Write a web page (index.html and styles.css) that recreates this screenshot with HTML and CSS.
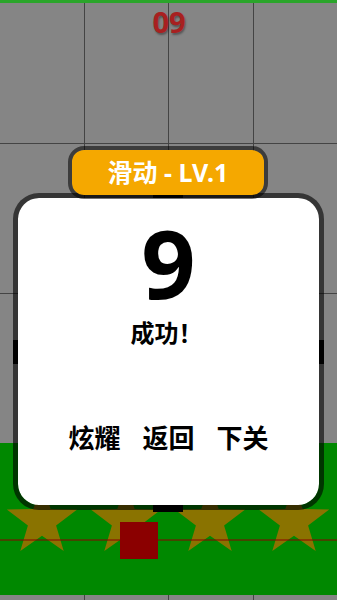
FILE: index.html
```html
<!DOCTYPE html>
<html>
<head>
<meta charset="utf-8">
<link rel="stylesheet" href="styles.css">
</head>
<body>
<div class="screen">
  <div class="board">
    <div class="top-strip"></div>
    <div class="row row-a"><div class="cell"></div><div class="cell"></div><div class="cell"></div><div class="cell"></div></div>
    <div class="row row-b"><div class="cell"></div><div class="cell"></div><div class="cell"></div><div class="cell"></div></div>
    <div class="row row-c"><div class="cell"></div><div class="cell"></div><div class="cell"></div><div class="cell"></div></div>
    <div class="ground"></div>
    <div class="row row-d"><div class="cell"></div><div class="cell"></div><div class="cell"></div><div class="cell"></div></div>
  </div>

  <div class="score">09</div>

  <svg class="stars" width="337" height="80" viewBox="0 480 337 80">
    <g fill="#8a7300">
      <polygon points="42,484 50.7,509 77.2,509.6 56.1,525.6 63.7,550.9 42,535.8 20.3,550.9 27.9,525.6 6.8,509.6 33.3,509"/>
      <polygon points="126,484 134.7,509 161.2,509.6 140.1,525.6 147.7,550.9 126,535.8 104.3,550.9 111.9,525.6 90.8,509.6 117.3,509"/>
      <polygon points="210,484 218.7,509 245.2,509.6 224.1,525.6 231.7,550.9 210,535.8 188.3,550.9 195.9,525.6 174.8,509.6 201.3,509"/>
      <polygon points="294,484 302.7,509 329.2,509.6 308.1,525.6 315.7,550.9 294,535.8 272.3,550.9 279.9,525.6 258.8,509.6 285.3,509"/>
    </g>
    <rect x="120" y="522" width="38" height="37" fill="#8b0000"/>
    <rect x="0" y="539.5" width="337" height="1" fill="#8b0000"/>
  </svg>

  <div class="hidden-bar bar-h"></div>
  <div class="hidden-bar bar-v"></div>

  <div class="overlay">
    <div class="level-pill">滑动 - LV.1</div>
    <div class="dialog">
      <div class="big-score">9</div>
      <div class="result">成功！</div>
      <div class="actions">
        <span class="action">炫耀</span>
        <span class="action">返回</span>
        <span class="action">下关</span>
      </div>
    </div>
  </div>
</div>
</body>
</html>
```

FILE: styles.css
```css
* { box-sizing: border-box; }
html, body { margin: 0; padding: 0; }
body {
  width: 337px;
  height: 600px;
  overflow: hidden;
  background: #858585;
  font-family: "Noto Sans", "Noto Sans CJK SC", sans-serif;
}
.screen {
  position: relative;
  width: 337px;
  height: 600px;
  overflow: hidden;
}
.board {
  display: flex;
  flex-direction: column;
  height: 600px;
}
.top-strip {
  height: 3px;
  background: #2aa52a;
}
.row {
  display: grid;
  grid-template-columns: 84px 84px 85px 84px;
}
.row-a { height: 140px; }
.row-b { height: 150px; border-top: 1px solid #444; }
.row-c { height: 150px; border-top: 1px solid #444; }
.row-d { flex: 1; }
.cell + .cell { border-left: 1px solid #444; }
.ground {
  height: 152px;
  background: #008800;
}
.score {
  position: absolute;
  top: 2px;
  left: 0;
  right: 0;
  text-align: center;
  padding-left: 1px;
  font-size: 29px;
  line-height: 40px;
  font-weight: 700;
  color: #a82020;
  text-shadow: 1px 2px 2px rgba(0,0,0,0.35);
}
.stars {
  position: absolute;
  left: 0;
  top: 480px;
  display: block;
}
.hidden-bar {
  position: absolute;
  background: #000;
}
.bar-h { left: 13px; width: 311px; top: 340px; height: 24px; }
.bar-v { left: 153px; width: 30px; top: 192px; height: 320px; }

.overlay {
  position: absolute;
  inset: 0;
  display: flex;
  flex-direction: column;
  align-items: center;
  padding-top: 146px;
}
.level-pill {
  position: relative;
  z-index: 2;
  width: 200px;
  height: 53px;
  margin-left: -1px;
  border: 4px solid rgba(0,0,0,0.55);
  border-radius: 16px;
  background: #f5a800;
  background-clip: padding-box;
  color: #fff;
  font-size: 25px;
  font-weight: 700;
  line-height: 44px;
  text-align: center;
}
.dialog {
  width: 311px;
  height: 317px;
  margin-top: -6px;
  border: 5px solid rgba(0,0,0,0.6);
  border-radius: 26px;
  background: #fff;
  background-clip: padding-box;
  display: flex;
  flex-direction: column;
  align-items: center;
  padding-top: 24px;
  color: #000;
}
.big-score {
  font-family: "Noto Sans", sans-serif;
  font-size: 95px;
  font-weight: 700;
  line-height: 80px;
  height: 80px;
}
.result {
  margin-top: 17px;
  margin-left: -4px;
  font-family: "Noto Sans CJK SC", sans-serif;
  font-size: 24px;
  font-weight: 700;
  line-height: 26px;
}
.actions {
  margin-top: 79px;
  display: flex;
  gap: 22px;
  font-family: "Noto Sans CJK SC", sans-serif;
  font-size: 26px;
  font-weight: 700;
  line-height: 26px;
}
.action { display: block; }
```
